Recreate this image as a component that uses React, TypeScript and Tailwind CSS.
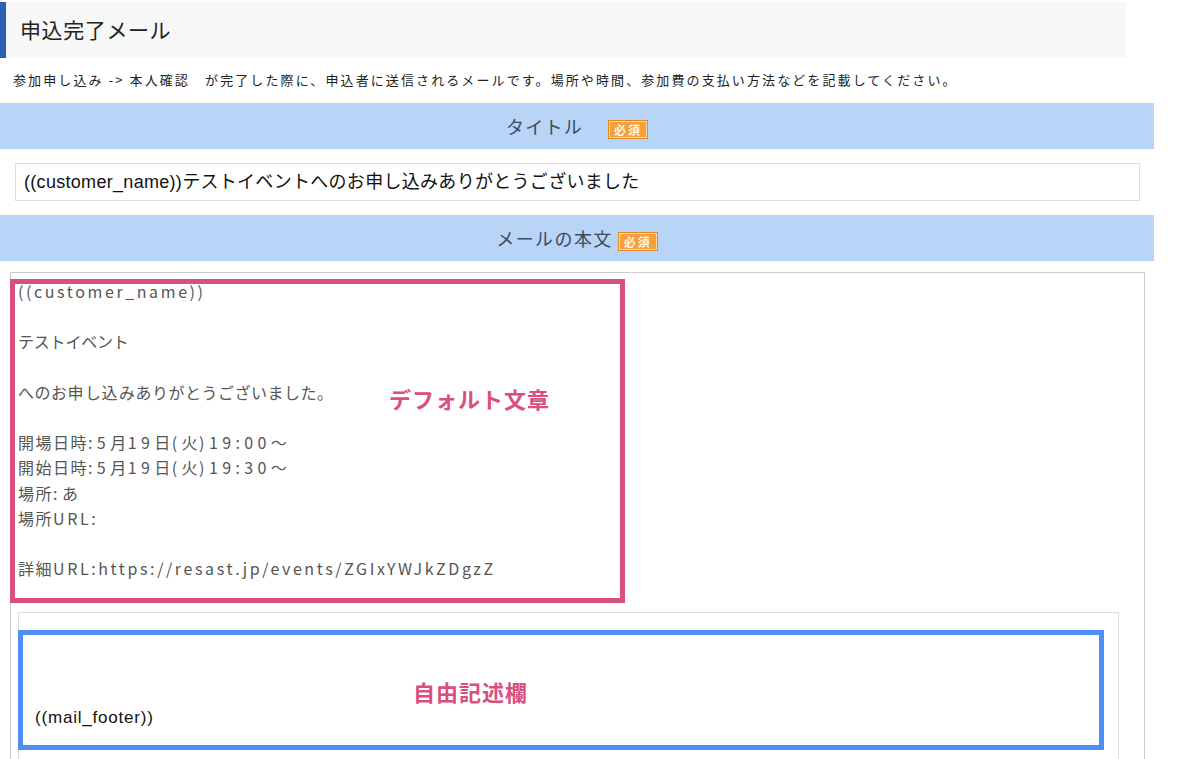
import React from "react";

const jp = { fontFamily: '"Noto Sans CJK JP", "Noto Sans", sans-serif' };
const latinJp = { fontFamily: '"Liberation Sans", "Noto Sans CJK JP", sans-serif' };

function Badge() {
  return (
    <span className="inline-flex items-center justify-center w-[40px] h-[19px] bg-[#f5a03a] border border-[#e08a26] shadow-[inset_0_0_0_1px_#fcd7a8] text-[12px] leading-none text-[#fff4e4] tracking-[2px] font-bold">
      必須
    </span>
  );
}

function Mixed({ text, wide }: { text: string; wide?: boolean }) {
  const runs =
    text.match(/[\x20-\x7e]+|[\u4e00-\u9fff]+|[\u3040-\u309f\u3002]+|[^\x20-\x7e\u4e00-\u9fff\u3040-\u309f\u3002]+/g) || [];
  return (
    <>
      {runs.map((r, i) => {
        if (/^[\x20-\x7e]+$/.test(r))
          return (
            <span key={i} className={wide ? "tracking-[4.4px]" : "tracking-[2.6px]"}>
              {r}
            </span>
          );
        if (/^[\u4e00-\u9fff]+$/.test(r)) return <span key={i} className="tracking-[1.5px]">{r}</span>;
        if (/^[\u3040-\u309f\u3002]+$/.test(r)) return <span key={i} className="tracking-[0.5px]">{r}</span>;
        return <span key={i} className="tracking-[-0.2px]">{r}</span>;
      })}
    </>
  );
}

export default function App() {
  const lines: [string, boolean?][] = [
    ["((customer_name))"],
    [""],
    ["テストイベント"],
    [""],
    ["へのお申し込みありがとうございました。"],
    [""],
    ["開場日時:5月19日(火)19:00〜", true],
    ["開始日時:5月19日(火)19:30〜", true],
    ["場所:あ", true],
    ["場所URL:"],
    [""],
    ["詳細URL:https://resast.jp/events/ZGIxYWJkZDgzZ"],
  ];
  return (
    <div className="w-[1200px] h-[759px] overflow-hidden bg-white" style={jp}>
      <div className="mt-[2px] w-[1126px] h-[56px] bg-[#f7f7f7] border-l-[6px] border-[#2b5fb4] flex items-center pl-[14px] text-[21px] tracking-[0.6px] text-[#222]">
        申込完了メール
      </div>
      <div className="mt-[12px] h-[20px] leading-[20px] pl-[13px] text-[13px] text-[#222] tracking-[2.1px] whitespace-nowrap">
        参加申し込み -&gt; 本人確認　が完了した際に、申込者に送信されるメールです。場所や時間、参加費の支払い方法などを記載してください。
      </div>
      <div className="mt-[13px] w-[1154px] h-[46px] bg-[#b8d4f7] flex items-center justify-center text-[18px] text-[#3d4a5c]">
        <span className="tracking-[1.2px]">タイトル</span>
        <span className="ml-[25px] mt-[2px]"><Badge /></span>
      </div>
      <div className="mt-[14px] ml-[15px] w-[1125px] h-[38px] border border-[#dddddd] flex items-center pl-[8px] text-[18px] tracking-[0.3px] text-[#111]" style={latinJp}>
        ((customer_name))テストイベントへのお申し込みありがとうございました
      </div>
      <div className="mt-[14px] w-[1154px] h-[46px] bg-[#b8d4f7] flex items-center justify-center text-[18px] text-[#3d4a5c]">
        <span className="tracking-[1.4px]">メールの本文</span>
        <span className="ml-[5px] mt-[2px]"><Badge /></span>
      </div>
      <div className="relative mt-[11px] ml-[10px] w-[1135px] h-[600px] border border-[#cccccc]">
        <div className="pt-[6px] pl-[7px] text-[16px] leading-[25.2px] text-[#555]">
          {lines.map(([l, w], i) => (
            <div key={i} className="h-[25.2px] whitespace-pre">{l ? <Mixed text={l} wide={w} /> : "\u00a0"}</div>
          ))}
        </div>
        <div className="mt-[31px] ml-[7px] w-[1101px] h-[300px] border border-[#dddddd]">
          <div className="mt-[92px] pl-[16px] text-[17px] tracking-[0.8px] text-[#111]" style={latinJp}>
            ((mail_footer))
          </div>
        </div>
        {/* annotations */}
        <div className="absolute left-[-1px] top-[6px] w-[615px] h-[324px] border-[5px] border-[#d94f7f]" />
        <div className="absolute left-[378px] top-[109px] text-[22px] font-bold text-[#d94f7f] tracking-[1px]">
          デフォルト文章
        </div>
        <div className="absolute left-[7px] top-[357px] w-[1086px] h-[120px] border-[5px] border-[#4f8ef5]" />
        <div className="absolute left-[402px] top-[402px] text-[22px] font-bold text-[#d94f7f] tracking-[1px]">
          自由記述欄
        </div>
      </div>
    </div>
  );
}
